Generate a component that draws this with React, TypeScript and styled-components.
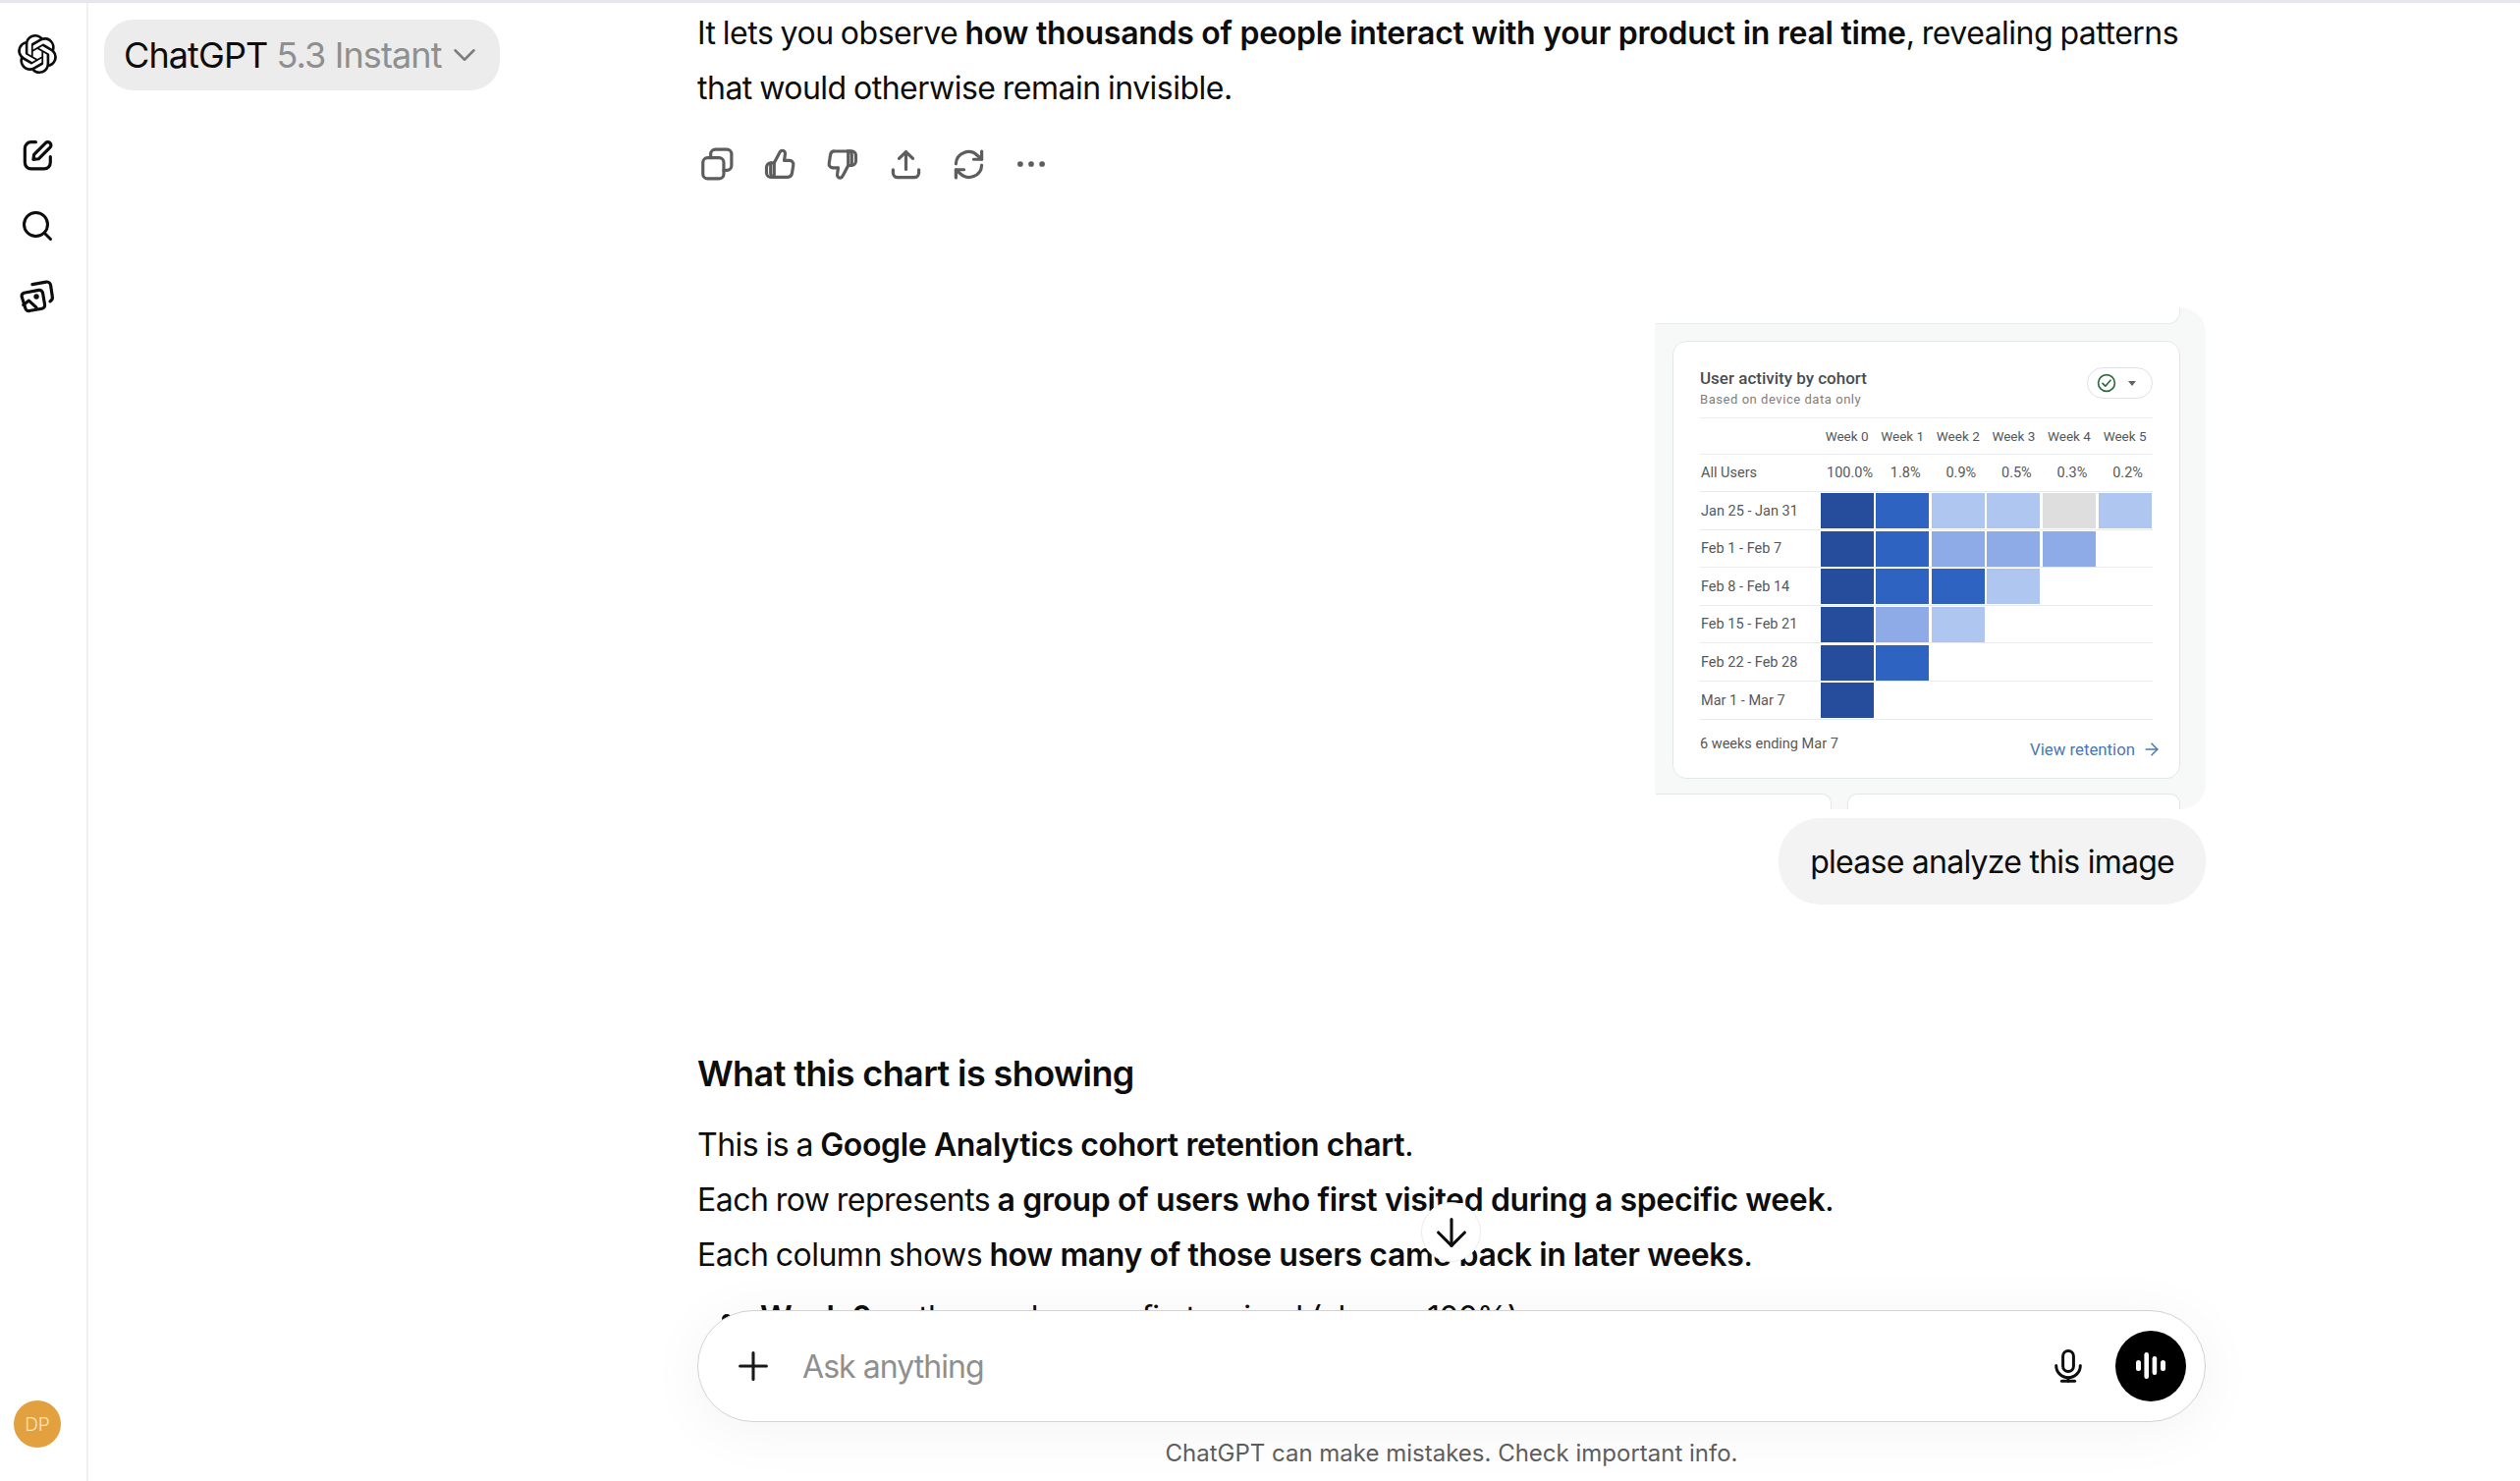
import React from "react";
import styled, { createGlobalStyle } from "styled-components";
import { SiOpenai } from "react-icons/si";
import { ArrowDown, ArrowRight, ChevronDown, Plus, Search } from "lucide-react";

const WEEKS = ["Week 0", "Week 1", "Week 2", "Week 3", "Week 4", "Week 5"];
const TOTALS = ["100.0%", "1.8%", "0.9%", "0.5%", "0.3%", "0.2%"];

const D = "#254d9c";
const M = "#2f63c2";
const S = "#8eabe8";
const L = "#aec6f0";
const G = "#dddedd";

const COHORTS = [
  { label: "Jan 25 - Jan 31", cells: [D, M, L, L, G, L] },
  { label: "Feb 1 - Feb 7", cells: [D, M, S, S, S] },
  { label: "Feb 8 - Feb 14", cells: [D, M, M, L] },
  { label: "Feb 15 - Feb 21", cells: [D, S, L] },
  { label: "Feb 22 - Feb 28", cells: [D, M] },
  { label: "Mar 1 - Mar 7", cells: [D] },
];

const Stroke: React.FC<{ size: number; width?: number; children: React.ReactNode }> = ({ size, width = 2, children }) => (
  <svg width={size} height={size} viewBox="0 0 24 24" fill="none" stroke="currentColor" strokeWidth={width} strokeLinecap="round" strokeLinejoin="round">
    {children}
  </svg>
);

const ComposeIcon = () => (
  <Stroke size={38}>
    <path d="M11 3.6H8a4 4 0 0 0-4 4v9.2a4 4 0 0 0 4 4h8.4a4 4 0 0 0 4-4V13" />
    <path d="M9.4 14.8l.5-3.2 7.4-7.4a2 2 0 0 1 2.9 2.9l-7.4 7.3z" />
  </Stroke>
);

const ImagesIcon = () => (
  <Stroke size={38}>
    <path d="M3.4 9.6l9.6-1.8a2.2 2.2 0 0 1 2.5 1.8l1.3 7.6a2.2 2.2 0 0 1-1.8 2.5l-8.2 1.5a2.2 2.2 0 0 1-2.5-1.8L2 12a2.2 2.2 0 0 1 1.4-2.4z" />
    <path d="M8.8 4.2l8.8-1.6a2.6 2.6 0 0 1 3 2.1l1 6.8a3.2 3.2 0 0 1-1.4 3.6" />
    <path d="M3 17.4l3.6-2.8 4.8 4.4" />
    <circle cx="11.4" cy="12" r="0.7" fill="currentColor" />
  </Stroke>
);

const CopyIcon = () => (
  <Stroke size={38}>
    <rect x="3" y="8" width="13.4" height="13.4" rx="3" />
    <path d="M8 8V5.6a3 3 0 0 1 3-3h7.4a3 3 0 0 1 3 3V13a3 3 0 0 1-3 3h-2" />
  </Stroke>
);

const ThumbUpIcon = () => (
  <Stroke size={36} width={2.1}>
    <path d="M8.2 11.2l3.5-6.6c.4-1 1.2-1.8 2-1.8 1.4 0 2.2 1.3 1.9 2.8L15 9.6h3.6a2.6 2.6 0 0 1 2.6 3l-.9 5.8a3 3 0 0 1-3 2.5H8.2z" />
    <path d="M8.2 11.2H6a3 3 0 0 0-3 3v3.8a3 3 0 0 0 3 3h2.6" />
    <path d="M6 11.4a3 3 0 0 0-.2 1.2v5.8a3 3 0 0 0 1.2 2.4" />
  </Stroke>
);

const ThumbDownIcon = () => (
  <Stroke size={36} width={2.1}>
    <path d="M15.8 13l-3.5 6.6c-.4 1-1.2 1.8-2 1.8-1.4 0-2.2-1.3-1.9-2.8l.6-4H5.4a2.6 2.6 0 0 1-2.6-3l.9-5.8a3 3 0 0 1 3-2.5h9.1z" />
    <path d="M15.8 13H18a3 3 0 0 0 3-3V6.2a3 3 0 0 0-3-3h-2.6" />
    <path d="M18 12.8a3 3 0 0 0 .2-1.2V5.8A3 3 0 0 0 17 3.4" />
  </Stroke>
);

const ShareIcon = () => (
  <Stroke size={35} width={2.2}>
    <path d="M12 15.4V3.4" />
    <path d="M7.2 7.8L12 3.2l4.8 4.6" />
    <path d="M3 15.6v2.2a3.2 3.2 0 0 0 3.2 3.2h11.6a3.2 3.2 0 0 0 3.2-3.2v-2.2" />
  </Stroke>
);

const RegenIcon = () => (
  <Stroke size={35} width={2.2}>
    <path d="M3 11.5a8.8 8.8 0 0 1 15-5.8l3 2.6" />
    <path d="M21 2.8v5.6h-5.6" />
    <path d="M21 12.5a8.8 8.8 0 0 1-15 5.8l-3-2.6" />
    <path d="M3 21.2v-5.6h5.6" />
  </Stroke>
);

const DotsIcon = () => (
  <svg width="36" height="36" viewBox="0 0 24 24" fill="currentColor">
    <circle cx="4.6" cy="12" r="1.9" />
    <circle cx="12" cy="12" r="1.9" />
    <circle cx="19.4" cy="12" r="1.9" />
  </svg>
);

const MicIcon = () => (
  <Stroke size={36}>
    <rect x="8.4" y="1.6" width="7.2" height="14" rx="3.6" />
    <path d="M3.8 11.6a8.2 8.2 0 0 0 16.4 0" />
    <path d="M12 19.8v2.4" />
    <path d="M7.6 22.2h8.8" />
  </Stroke>
);

const VoiceIcon = () => (
  <svg width="32" height="32" viewBox="0 0 32 32" fill="#fff">
    <rect x="1" y="10" width="5" height="11" rx="2.5" />
    <rect x="9.4" y="2" width="4.6" height="27" rx="2.3" />
    <rect x="17.6" y="6" width="4.6" height="19" rx="2.3" />
    <rect x="26" y="10" width="5" height="11" rx="2.5" />
  </svg>
);

const GreenCheck = () => (
  <svg width="20" height="20" viewBox="0 0 20 20" fill="none" stroke="#2f6b3f" strokeWidth="1.7" strokeLinecap="round" strokeLinejoin="round">
    <circle cx="10" cy="10" r="8.4" />
    <path d="M6 10.4l2.8 2.8 5.2-6" />
  </svg>
);

const App: React.FC = () => (
  <Page>
    <GlobalStyle />
    <Sidebar>
      <SideIcon>
        <SiOpenai size={40} />
      </SideIcon>
      <SideNav>
        <SideIcon>
          <ComposeIcon />
        </SideIcon>
        <SideIcon>
          <Search size={36} strokeWidth={2} />
        </SideIcon>
        <SideIcon>
          <ImagesIcon />
        </SideIcon>
      </SideNav>
      <Avatar>DP</Avatar>
    </Sidebar>

    <Main>
      <ModelPill>
        <span>
          ChatGPT <ModelVersion>5.3 Instant</ModelVersion>
        </span>
        <ChevronDown size={38} color="#7d7d7d" strokeWidth={1.6} />
      </ModelPill>

      <Thread>
        <LeadPara>
          It lets you observe <strong>how thousands of people interact with your product in real time</strong>, revealing patterns that would otherwise remain invisible.
        </LeadPara>
        <Actions>
          <ActionButton><CopyIcon /></ActionButton>
          <ActionButton><ThumbUpIcon /></ActionButton>
          <ActionButton><ThumbDownIcon /></ActionButton>
          <ActionButton><ShareIcon /></ActionButton>
          <ActionButton><RegenIcon /></ActionButton>
          <ActionButton><DotsIcon /></ActionButton>
        </Actions>

        <UserTurn>
          <ImageFrame>
            <TopStub />
            <ChartCard>
              <ChartHead>
                <div>
                  <ChartTitle>User activity by cohort</ChartTitle>
                  <ChartSubtitle>Based on device data only</ChartSubtitle>
                </div>
                <StatusChip>
                  <GreenCheck />
                  <Caret />
                </StatusChip>
              </ChartHead>
              <WeekRow>
                <span />
                {WEEKS.map((w) => (
                  <WeekLabel key={w}>{w}</WeekLabel>
                ))}
              </WeekRow>
              <TotalRow>
                <RowLabel>All Users</RowLabel>
                {TOTALS.map((t) => (
                  <TotalValue key={t}>{t}</TotalValue>
                ))}
              </TotalRow>
              {COHORTS.map((row) => (
                <CohortRow key={row.label}>
                  <RowLabel>{row.label}</RowLabel>
                  {row.cells.map((c, i) => (
                    <Cell key={i} $color={c} />
                  ))}
                </CohortRow>
              ))}
              <ChartFoot>
                <FootNote>6 weeks ending Mar 7</FootNote>
                <RetentionLink>
                  View retention <ArrowRight size={20} strokeWidth={1.8} />
                </RetentionLink>
              </ChartFoot>
            </ChartCard>
            <BottomStubs>
              <LeftStub />
              <RightStub />
            </BottomStubs>
          </ImageFrame>
          <Bubble>please analyze this image</Bubble>
        </UserTurn>

        <Heading>What this chart is showing</Heading>
        <Para>
          This is a <strong>Google Analytics cohort retention chart</strong>.
          <br />
          Each row represents <strong>a group of users who first visited during a specific week</strong>.
          <br />
          Each column shows <strong>how many of those users came back in later weeks</strong>.
        </Para>
        <BulletList>
          <BulletItem>
            <strong>Week 0</strong> — the week users first arrived (always 100%)
          </BulletItem>
        </BulletList>
      </Thread>

      <ScrollDown>
        <ArrowDown size={46} strokeWidth={1.6} />
      </ScrollDown>

      <Dock>
        <Composer>
          <Plus size={46} strokeWidth={1.6} color="#1a1a1a" />
          <Placeholder>Ask anything</Placeholder>
          <MicIcon />
          <VoiceButton>
            <VoiceIcon />
          </VoiceButton>
        </Composer>
        <Disclaimer>ChatGPT can make mistakes. Check important info.</Disclaimer>
      </Dock>
    </Main>
  </Page>
);

export default App;

// Styled

const GlobalStyle = createGlobalStyle`
  html, body {
    margin: 0;
    padding: 0;
    background: #fff;
  }
  * {
    box-sizing: border-box;
  }
`;

const Page = styled.div`
  display: flex;
  width: 2566px;
  height: 1508px;
  overflow: hidden;
  border-top: 3px solid #e6e6ec;
  color: #0d0d0d;
  font-family: Inter, "Liberation Sans", sans-serif;
`;

const Sidebar = styled.aside`
  display: flex;
  flex-direction: column;
  align-items: flex-start;
  flex: 0 0 90px;
  padding: 16px 0 34px 2px;
  border-right: 2px solid #f0f0f0;
  color: #0d0d0d;
`;

const SideNav = styled.nav`
  display: flex;
  flex: 1;
  flex-direction: column;
  margin-top: 31px;
`;

const SideIcon = styled.div`
  display: flex;
  align-items: center;
  justify-content: center;
  width: 72px;
  height: 72px;
`;

const Avatar = styled.div`
  display: flex;
  align-items: center;
  justify-content: center;
  width: 48px;
  height: 48px;
  margin-left: 12px;
  border-radius: 50%;
  background: #e2a03f;
  color: #fde4b4;
  font-size: 19px;
  font-weight: 300;
`;

const Main = styled.main`
  position: relative;
  flex: 1;
  overflow: hidden;
`;

const ModelPill = styled.div`
  position: absolute;
  top: 17px;
  left: 16px;
  display: flex;
  align-items: center;
  gap: 4px;
  height: 72px;
  padding: 0 17px 0 20px;
  border-radius: 30px;
  background: #ececec;
  font-size: 36px;
  letter-spacing: -0.9px;
  white-space: nowrap;
`;

const ModelVersion = styled.span`
  color: #8f8f8f;
`;

const Thread = styled.div`
  width: 1536px;
  margin-left: 620px;
  padding-top: 3px;
`;

const Para = styled.p`
  margin: 0;
  font-size: 32px;
  line-height: 56px;
  letter-spacing: -0.5px;
  word-spacing: -1.2px;

  strong {
    font-weight: 600;
    letter-spacing: -0.38px;
    word-spacing: 0;
  }
`;

const LeadPara = styled(Para)`
  strong {
    letter-spacing: -0.28px;
  }
`;

const Actions = styled.div`
  display: flex;
  margin: 17px 0 0 -12px;
  color: #5d5d5d;
`;

const ActionButton = styled.div`
  display: flex;
  align-items: center;
  justify-content: center;
  width: 64px;
  height: 64px;
`;

const UserTurn = styled.section`
  display: flex;
  flex-direction: column;
  align-items: flex-end;
  gap: 9px;
  margin-top: 114px;
`;

const ImageFrame = styled.div`
  display: flex;
  flex-direction: column;
  width: 561px;
  height: 511px;
  overflow: hidden;
  border-radius: 22px 26px 26px 22px;
  background: #f7f9f9;
`;

const TopStub = styled.div`
  flex: 0 0 17px;
  width: 535px;
  border-bottom: 1px solid #e8eaed;
  border-right: 1px solid #e8eaed;
  border-bottom-right-radius: 12px;
  background: #fff;
`;

const ChartCard = styled.div`
  display: flex;
  flex-direction: column;
  flex: 0 0 446px;
  width: 517px;
  margin: 17px 0 0 18px;
  padding: 0 27px;
  border: 1px solid #e3e6e8;
  border-radius: 14px;
  background: #fff;
  font-family: Roboto, sans-serif;
  color: #55585b;
`;

const ChartHead = styled.div`
  display: flex;
  align-items: flex-start;
  justify-content: space-between;
  height: 78px;
  padding-top: 27px;
  border-bottom: 1px solid #e8eaed;
`;

const ChartTitle = styled.div`
  font-size: 17px;
  font-weight: 500;
  line-height: 20px;
  color: #4a4d50;
`;

const ChartSubtitle = styled.div`
  margin-top: 4px;
  font-size: 13px;
  letter-spacing: 0.55px;
  line-height: 16px;
  color: #7b7e82;
`;

const StatusChip = styled.div`
  display: flex;
  align-items: center;
  gap: 12px;
  width: 67px;
  height: 32px;
  margin-top: -1px;
  padding-left: 9px;
  border: 1px solid #dfe2e5;
  border-radius: 16px;
`;

const Caret = styled.span`
  width: 0;
  height: 0;
  border-left: 4.5px solid transparent;
  border-right: 4.5px solid transparent;
  border-top: 5px solid #5f6368;
`;

const rowColumns = "120px repeat(6, 54px)";

const WeekRow = styled.div`
  display: grid;
  grid-template-columns: ${rowColumns};
  column-gap: 2.6px;
  align-items: center;
  height: 37px;
  border-bottom: 1px solid #e8eaed;
`;

const WeekLabel = styled.span`
  font-size: 13.5px;
  text-align: center;
  white-space: nowrap;
`;

const TotalRow = styled(WeekRow)`
  height: 38px;
`;

const TotalValue = styled.span`
  padding-left: 6px;
  font-size: 14.5px;
  text-align: center;
  white-space: nowrap;
`;

const RowLabel = styled.span`
  padding-left: 1px;
  font-size: 14.5px;
  white-space: nowrap;
`;

const CohortRow = styled.div`
  display: grid;
  grid-template-columns: ${rowColumns};
  grid-auto-rows: 36px;
  column-gap: 2.6px;
  align-items: center;
  height: 38.6px;
  padding-top: 1.2px;
  border-bottom: 1px solid #e8eaed;
`;

const Cell = styled.div<{ $color: string }>`
  height: 36px;
  background: ${({ $color }) => $color};
`;

const ChartFoot = styled.div`
  display: flex;
  justify-content: space-between;
  padding-top: 15px;
`;

const FootNote = styled.span`
  font-size: 14.5px;
  line-height: 20px;
`;

const RetentionLink = styled.span`
  display: flex;
  align-items: center;
  gap: 7px;
  margin: 5px -9px 0 0;
  font-size: 16.8px;
  line-height: 20px;
  color: #4a77b4;
`;

const BottomStubs = styled.div`
  display: flex;
  flex: 0 0 16px;
  gap: 16px;
  margin-top: 15px;
`;

const LeftStub = styled.div`
  width: 180px;
  border-top: 1px solid #e3e6e8;
  border-right: 1px solid #e3e6e8;
  border-top-right-radius: 10px;
  background: #fff;
`;

const RightStub = styled.div`
  width: 339px;
  border: 1px solid #e3e6e8;
  border-bottom: 0;
  border-radius: 10px 10px 0 0;
  background: #fff;
`;

const Bubble = styled.div`
  display: flex;
  align-items: center;
  height: 88px;
  padding: 0 32px;
  border-radius: 42px;
  background: #f3f3f3;
  font-size: 32px;
  letter-spacing: -0.75px;
`;

const Heading = styled.h2`
  margin: 144px 0 17px;
  font-size: 36px;
  font-weight: 600;
  line-height: 56px;
  letter-spacing: -0.6px;
`;

const BulletList = styled.ul`
  margin: 8px 0 0;
  padding-left: 64px;
  list-style: none;
  font-size: 32px;
  line-height: 56px;
  letter-spacing: -0.8px;

  strong {
    font-weight: 600;
    letter-spacing: -0.42px;
  }
`;

const BulletItem = styled.li`
  position: relative;

  &::before {
    content: "";
    position: absolute;
    top: 24px;
    left: -39px;
    width: 10px;
    height: 10px;
    border-radius: 50%;
    background: #0d0d0d;
  }
`;

const ScrollDown = styled.div`
  position: absolute;
  top: 1221px;
  left: 1357px;
  display: flex;
  align-items: center;
  justify-content: center;
  width: 61px;
  height: 61px;
  border: 1px solid #ececec;
  border-radius: 50%;
  background: #fff;
`;

const Dock = styled.div`
  position: absolute;
  left: 620px;
  top: 1331px;
  width: 1536px;
`;

const Composer = styled.div`
  display: flex;
  align-items: center;
  height: 114px;
  padding: 0 19px 0 33px;
  border: 1px solid #d3d3d3;
  border-radius: 57px;
  background: #fff;
  box-shadow: 0 8px 60px rgba(0, 0, 0, 0.05);
`;

const Placeholder = styled.span`
  flex: 1;
  margin-left: 27px;
  font-size: 32px;
  letter-spacing: -0.95px;
  color: #8f8f8f;
`;

const VoiceButton = styled.div`
  display: flex;
  align-items: center;
  justify-content: center;
  width: 72px;
  height: 72px;
  margin-left: 30px;
  border-radius: 50%;
  background: #000;
`;

const Disclaimer = styled.div`
  margin-top: 16px;
  font-size: 24px;
  line-height: 32px;
  text-align: center;
  color: #5d5d5d;
`;
